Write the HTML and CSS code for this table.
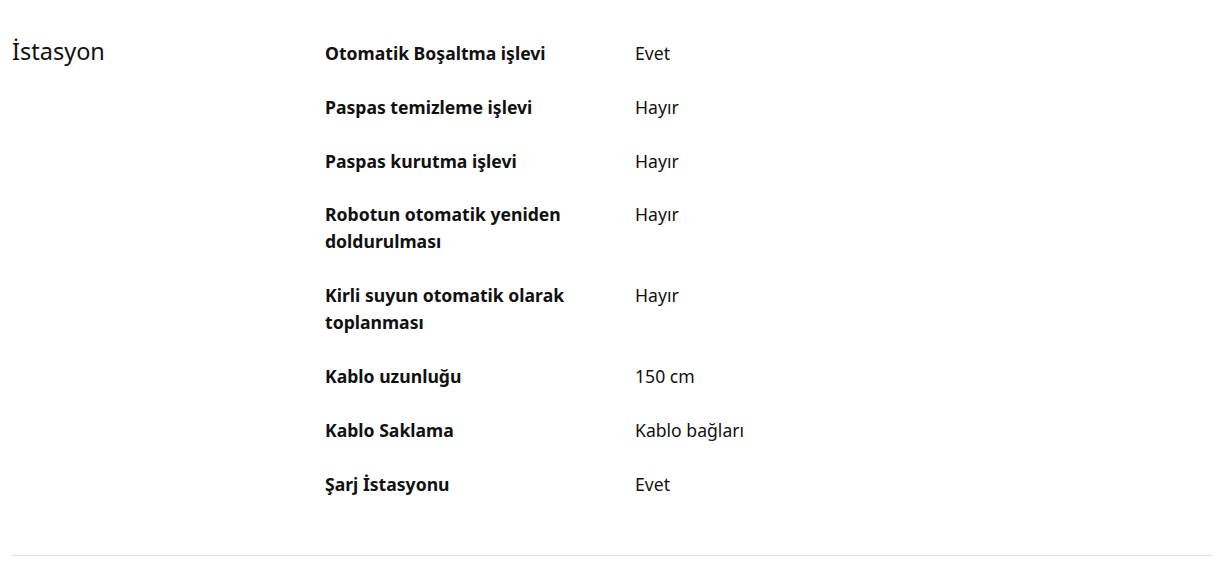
FILE: index.html
```html
<!DOCTYPE html>
<html lang="tr">
<head>
<meta charset="utf-8">
<title>İstasyon</title>
<link rel="stylesheet" href="styles.css">
</head>
<body>
<section class="spec-section">
  <h2 class="spec-title">İstasyon</h2>
  <dl class="spec-list">
    <div class="spec-row"><dt>Otomatik Boşaltma işlevi</dt><dd>Evet</dd></div>
    <div class="spec-row"><dt>Paspas temizleme işlevi</dt><dd>Hayır</dd></div>
    <div class="spec-row"><dt>Paspas kurutma işlevi</dt><dd>Hayır</dd></div>
    <div class="spec-row"><dt>Robotun otomatik yeniden doldurulması</dt><dd>Hayır</dd></div>
    <div class="spec-row"><dt>Kirli suyun otomatik olarak toplanması</dt><dd>Hayır</dd></div>
    <div class="spec-row"><dt>Kablo uzunluğu</dt><dd>150 cm</dd></div>
    <div class="spec-row"><dt>Kablo Saklama</dt><dd>Kablo bağları</dd></div>
    <div class="spec-row"><dt>Şarj İstasyonu</dt><dd>Evet</dd></div>
  </dl>
</section>
</body>
</html>
```
FILE: styles.css
```css
html, body {
  margin: 0;
  padding: 0;
  background: #fff;
}
body {
  font-family: "Noto Sans", "Open Sans", sans-serif;
  color: #111;
}
.spec-section {
  margin: 0 8px 0 12px;
  padding: 36px 0 57px;
  border-bottom: 1px solid #dfdfdf;
  display: grid;
  grid-template-columns: 313px 1fr;
}
.spec-title {
  margin: 0;
  font-size: 23.5px;
  font-weight: 400;
  line-height: 30px;
  color: #111;
}
.spec-list {
  margin: 0;
  display: flex;
  flex-direction: column;
  gap: 26.8px;
  padding-top: 4px;
}
.spec-row {
  display: grid;
  grid-template-columns: 310px 1fr;
  font-size: 17.6px;
  line-height: 27px;
}
.spec-row dt {
  font-weight: 700;
  padding-right: 50px;
}
.spec-row dd {
  margin: 0;
  font-weight: 400;
}
```
